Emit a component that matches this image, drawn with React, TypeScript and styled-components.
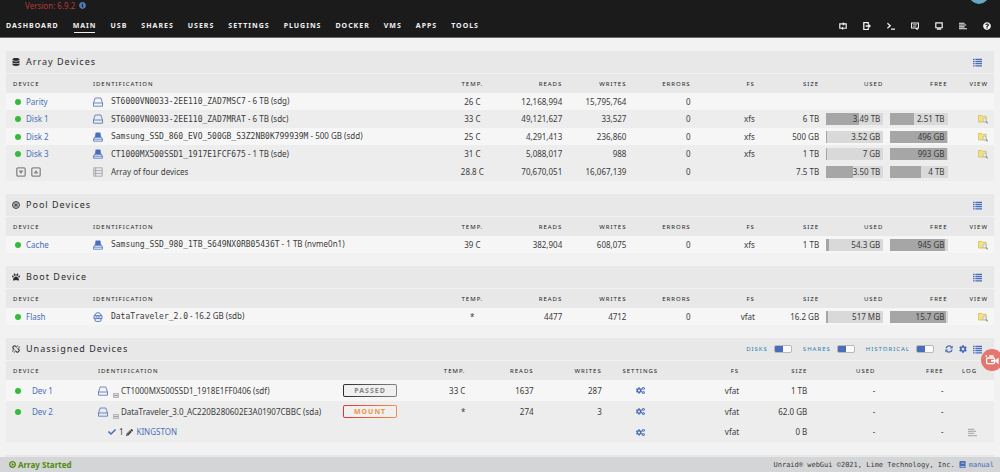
import React from 'react';
import styled, { createGlobalStyle, css } from 'styled-components';
import {
  FaBook,
  FaCheck,
  FaCog,
  FaCogs,
  FaDatabase,
  FaInfoCircle,
  FaPaw,
  FaPencilAlt,
  FaQuestionCircle,
} from 'react-icons/fa';

const ink = '#3a3a3a';
const blue = '#486dba';
const sans = '"Noto Sans", "Open Sans", sans-serif';
const mono = '"DejaVu Sans Mono", "Liberation Mono", monospace';

const GlobalStyle = createGlobalStyle`
  * { box-sizing: border-box; }
  body {
    margin: 0;
    background: #f2f2f2;
    color: ${ink};
    font: 8px/12px ${sans};
  }
  a { color: ${blue}; text-decoration: none; }
  svg { display: block; flex: none; }
`;

const Shell = styled.div`
  display: flex;
  flex-direction: column;
  height: 100vh;
  overflow: hidden;
`;

/* ---------- header ---------- */

const Header = styled.header`
  position: relative;
  flex: none;
  background: #1b1b1b;
  border-bottom: 1px solid #6a6a6a;
  overflow: hidden;
`;

const Version = styled.div`
  display: flex;
  align-items: center;
  gap: 4px;
  height: 15px;
  padding: 0 25px 4px;
  line-height: 11px;
  color: #b23a3a;
  svg { color: #4f78bd; }
`;

const Avatar = styled.span`
  position: absolute;
  top: -16px;
  right: 11px;
  width: 20px;
  height: 20px;
  border-radius: 50%;
  background: #63a9c4;
`;

const NavBar = styled.nav`
  display: flex;
  justify-content: space-between;
  height: 22px;
  padding: 0 9px 0 6px;
`;

const NavGroup = styled.div<{ $gap: number }>`
  display: flex;
  align-items: center;
  gap: ${(p) => p.$gap}px;
`;

const NavLink = styled.a<{ $active?: boolean }>`
  position: relative;
  color: #f2f2f2;
  font-size: 7px;
  font-weight: 700;
  letter-spacing: 1px;
  ${(p) =>
    p.$active &&
    css`
      &::after {
        content: '';
        position: absolute;
        left: 1px;
        right: 2px;
        bottom: -1px;
        height: 1px;
        background: #f2f2f2;
      }
    `}
`;

const ToolButton = styled.button`
  display: flex;
  padding: 0;
  border: 0;
  background: none;
  color: ${(p) => p.color ?? '#f2f2f2'};
`;

/* ---------- panels ---------- */

const Main = styled.main`
  flex: 1;
  min-height: 0;
  overflow: hidden;
  display: flex;
  flex-direction: column;
  gap: 13px;
  padding: 13px 6px 0;
`;

const Panel = styled.section`
  flex: none;
`;

const PanelTitle = styled.div`
  display: flex;
  align-items: center;
  justify-content: space-between;
  height: 22px;
  padding: 0 12px 0 6px;
  background: #e8e8e8;
`;

const Heading = styled.h2`
  display: flex;
  align-items: center;
  gap: 6px;
  margin: 0;
  font-size: 9px;
  font-weight: 400;
  letter-spacing: 1px;
  color: #2c2c2c;
`;

const Tools = styled.div`
  display: flex;
  align-items: center;
  gap: 6px;
`;

const SwitchLabel = styled.label`
  display: flex;
  align-items: center;
  gap: 6px;
  margin-right: 5px;
  color: #1f7fae;
  font-size: 6px;
  letter-spacing: 1px;
`;

const Switch = styled.input`
  appearance: none;
  width: 18px;
  height: 8px;
  margin: 0;
  border: 1px solid #b8b8b8;
  border-radius: 2px;
  background: linear-gradient(90deg, #486dba 50%, #fafafa 50%);
`;

const Table = styled.table<{ $roomy?: boolean }>`
  width: 100%;
  margin-top: 1px;
  table-layout: fixed;
  border-collapse: collapse;

  th, td {
    padding: 0;
    white-space: nowrap;
    text-align: right;
    font-weight: 400;
  }
  th {
    height: 19px;
    background: #e8e8e8;
    color: #222;
    font-size: 6px;
    line-height: 10px;
    letter-spacing: 1px;
  }
  td { height: ${(p) => (p.$roomy ? 21 : 17)}px; }
  tbody tr { background: #f6f6f6; }
  tbody tr:nth-child(even), tfoot tr { background: #ededed; }
  tbody tr:nth-child(even) td, tfoot td { height: ${(p) => (p.$roomy ? 21 : 18)}px; }
  th:first-child, td:first-child { padding-left: 7px; text-align: left; }
  th:last-child, td:last-child { padding-right: ${(p) => (p.$roomy ? 17 : 6)}px; }
  th.left, td.left { text-align: left; }
  th.center, td.center { text-align: center; }
`;

const PartitionRow = styled.tr`
  && { background: #ededed; }
  && td { height: 20px; }
`;

const Line = styled.div<{ $gap?: number; $indent?: number }>`
  display: flex;
  align-items: center;
  gap: ${(p) => p.$gap ?? 5}px;
  padding-left: ${(p) => p.$indent ?? 0}px;
`;

const Orb = styled.span`
  width: 6px;
  height: 6px;
  margin: 0 0 0 2px;
  border-radius: 50%;
  background: #33bb3a;
`;

const Serial = styled.span`
  font-family: ${mono};
`;

const Meter = styled.div`
  position: relative;
  height: 12px;
  margin-left: 7px;
  background: #d9d9d9;
`;

const Fill = styled.div`
  height: 100%;
  background: #a6a6a6;
`;

const MeterText = styled.span`
  position: absolute;
  inset: 0 3px 0 0;
`;

const EndIcon = styled.a`
  display: flex;
  justify-content: flex-end;
`;

const MutedIcon = styled.span`
  display: flex;
  justify-content: flex-end;
  color: #b0b0b0;
`;

const CenterIcon = styled.a`
  display: flex;
  justify-content: center;
`;

const Expand = styled.button`
  align-self: flex-end;
  width: 6px;
  height: 5px;
  padding: 0;
  border: 1px solid #b8b8b8;
  background: linear-gradient(#dcdcdc 33%, #a0a0a0 33% 67%, #dcdcdc 67%);
`;

const Identity = styled.div`
  display: flex;
  gap: 5px;
  height: 15px;
  align-items: center;
`;

const Action = styled.button<{ $from: string; $to: string }>`
  display: block;
  width: 100%;
  height: 13px;
  padding: 0;
  border: 1px solid transparent;
  border-radius: 2px;
  background:
    linear-gradient(#f0f0f0, #f0f0f0) padding-box,
    linear-gradient(90deg, ${(p) => p.$from}, ${(p) => p.$to}) border-box;
  color: ${(p) => p.$to};
  font: 700 7px/10px ${sans};
  letter-spacing: 1px;
`;

/* ---------- footer and overlay ---------- */

const Footer = styled.footer`
  flex: none;
  display: flex;
  align-items: center;
  justify-content: space-between;
  height: 15px;
  padding: 0 6px 0 9px;
  background: #d4d5d6;
`;

const Status = styled.strong`
  display: flex;
  align-items: center;
  gap: 2px;
  color: #4f8a10;
`;

const Credits = styled.div`
  display: flex;
  align-items: center;
  gap: 4px;
  font: 7px/12px ${mono};
  a { display: flex; align-items: center; gap: 3px; }
`;

const Recorder = styled.button`
  position: fixed;
  top: 349px;
  right: -3px;
  display: flex;
  align-items: center;
  justify-content: center;
  width: 22px;
  height: 22px;
  padding: 0;
  border: 0;
  border-radius: 50%;
  background: #e4766d;
`;

/* ---------- drawings ---------- */

const Glyph = ({ size = 10, children }: { size?: number; children: React.ReactNode }) => (
  <svg width={size} height={size} viewBox="0 0 10 10" fill="none" stroke="currentColor" strokeWidth="1">
    {children}
  </svg>
);

const HddIcon = () => (
  <Glyph>
    <path d="M2.200 1h5.600l1.700 5v3.200h-9V6z" strokeWidth=".8" />
    <path d="M.5 6h9" strokeWidth=".8" />
  </Glyph>
);

const SsdIcon = () => (
  <Glyph>
    <path d="M2.800.8h4.400l.8 4.600H2z" fill="currentColor" strokeWidth=".4" />
    <path d="M1.800 5 .6 7v2.200h8.800V7L8.200 5M.6 7.200h8.800" strokeWidth=".8" />
  </Glyph>
);

const FlashIcon = () => (
  <Glyph>
    <path d="M2 3.400C2.200 1.200 3.400.8 5 .8s2.800.4 3 2.600" strokeWidth=".9" />
    <path d="M1 3.600h8v3H1zM2 6.600v1.600c0 .8.5 1.200 1.200 1.200h3.600c.7 0 1.200-.4 1.200-1.200V6.600M2.500 5h5" strokeWidth=".9" />
  </Glyph>
);

const StackIcon = () => (
  <Glyph>
    <path d="M.8.8h8.400v8.400H.8zM.8 3.600h8.400M.8 6.400h8.400M2.700.8v8.400" stroke="#9a9a9a" strokeWidth=".8" />
  </Glyph>
);

const BrowseIcon = () => (
  <Glyph>
    <path d="M.6 1.500h3l.8.800h3.800v5.700H.6z" fill="#f3e184" stroke="#d8bd4c" strokeWidth=".8" />
    <circle cx="6.600" cy="6" r="1.900" fill="#e6e9ee" stroke="#b4b8bf" strokeWidth=".8" />
    <path d="m8 7.500 1.700 1.800" stroke="#8f8f8f" strokeWidth="1.200" />
  </Glyph>
);

const CaretBox = ({ up }: { up?: boolean }) => (
  <Glyph>
    <rect x=".8" y=".8" width="8.400" height="8.400" rx="1.200" strokeWidth="1.300" />
    <path d={up ? 'M2.600 6.500 5 3l2.400 3.500z' : 'M2.600 3.500 5 7l2.400-3.500z'} fill="currentColor" stroke="none" />
  </Glyph>
);

const PoolIcon = () => (
  <Glyph size={8}>
    <circle cx="5" cy="5" r="4.300" strokeWidth="1.200" />
    <circle cx="5" cy="5" r="2.500" strokeWidth=".8" />
    <circle cx="5" cy="5" r="1.300" fill="currentColor" stroke="none" />
  </Glyph>
);

const BrokenChainIcon = () => (
  <Glyph size={8}>
    <path d="M5.800 2.900 4.300 1.400a1.500 1.500 0 0 0-2.100 0l-.7.7a1.500 1.500 0 0 0 0 2.100L3 5.700M7 4.300l1.500 1.500a1.500 1.500 0 0 1 0 2.100l-.7.7a1.500 1.500 0 0 1-2.100 0L4.200 7.100" strokeWidth="1.300" />
    <path d="M.4 8.700 2.100 7M3 9.800V7.900M.1 6.500h1.700M9.600 1.300 7.900 3M7 .2V2M9.900 3.500H8.200" strokeWidth=".8" />
  </Glyph>
);

const RefreshIcon = () => (
  <Glyph size={8}>
    <path d="M1.200 4.300A3.900 3.900 0 0 1 8 2.500M8.800 5.700A3.900 3.900 0 0 1 2 7.500" strokeWidth="1.600" />
    <path d="M9.600.7v3.600H6zM.4 9.300V5.700H4z" fill="currentColor" stroke="none" />
  </Glyph>
);

const PlayIcon = () => (
  <Glyph size={7}>
    <circle cx="5" cy="5" r="4" strokeWidth="1.900" />
    <path d="M3.800 2.700 7.500 5 3.800 7.300z" fill="currentColor" stroke="none" />
  </Glyph>
);

const ListIcon = () => (
  <Glyph size={9}>
    <path d="M0 1.500h1.700M0 3.900h1.700M0 6.300h1.700M0 8.700h1.700M2.600 1.500H10M2.600 3.900H10M2.600 6.300H10M2.600 8.700H10" strokeWidth="1.500" />
  </Glyph>
);

const LogIcon = ({ size = 8 }: { size?: number }) => (
  <Glyph size={size}>
    <path d="M0 1.500h7M0 3.800h9M0 6.100h7M0 8.400h10" strokeWidth="1.400" />
  </Glyph>
);

const navTools: { name: string; icon: React.ReactNode }[] = [
  {
    name: 'Switch language',
    icon: (
      <Glyph size={8}>
        <path d="M3.200 7.800H1V2.400h4.500M6.500 2.400H9v5.400H4.800" strokeWidth="1.500" />
        <path d="M4.800.1 7.700 2.400 4.800 4.700zM5.200 5.500 2.300 7.800l2.900 2.300z" fill="currentColor" stroke="none" />
      </Glyph>
    ),
  },
  {
    name: 'Logout',
    icon: (
      <Glyph size={8}>
        <path d="M6.500 2.800V.8H1v8.600h5.500v-2M3.300 5H8" strokeWidth="1.600" />
        <path d="M6.600 2 10 5 6.600 8z" fill="currentColor" stroke="none" />
      </Glyph>
    ),
  },
  {
    name: 'Terminal',
    icon: (
      <Glyph size={8}>
        <path d="m.5 1.500 3.600 3.200L.5 7.900M5 9h5" strokeWidth="1.600" />
      </Glyph>
    ),
  },
  {
    name: 'Feedback',
    icon: (
      <Glyph size={8}>
        <path d="M.7 1.200h8.600v6.300H7.800v1.800L5.800 7.500H.7z" strokeWidth="1.300" />
        <path d="M2.500 3.500h5M2.500 5.300h4" strokeWidth=".9" />
      </Glyph>
    ),
  },
  {
    name: 'Info',
    icon: (
      <Glyph size={8}>
        <path d="M1 1h8v6.200H1z" strokeWidth="1.500" />
        <path d="M2.300 9h5.400M3.500 7.500V9M6.500 7.500V9" strokeWidth="1.500" />
      </Glyph>
    ),
  },
  { name: 'Log', icon: <LogIcon /> },
  { name: 'Help', icon: <FaQuestionCircle size={8} /> },
];

const CameraIcon = () => (
  <svg width="14" height="12" viewBox="0 0 14 12" fill="none" stroke="#fff" strokeWidth="1.300">
    <rect x="1.600" y="4" width="8" height="5.600" rx="1" />
    <path d="M10.600 6.800 13 5v3.800z" fill="#fff" />
    <path d="M6 6.800h3" strokeWidth="2" />
    <path d="M5 3V2h3v1" />
    <path d="M.5 2h1.500" />
  </svg>
);

/* ---------- data ---------- */

const navItems = ['DASHBOARD', 'MAIN', 'USB', 'SHARES', 'USERS', 'SETTINGS', 'PLUGINS', 'DOCKER', 'VMS', 'APPS', 'TOOLS'];

type Space = { label: string; percent: number };

type Disk = {
  name: string;
  icon: React.ReactNode;
  serial: string;
  detail: string;
  temp: string;
  reads: string;
  writes: string;
  fs?: string;
  size?: string;
  used?: Space;
  free?: Space;
};

const arrayDisks: Disk[] = [
  { name: 'Parity', icon: <HddIcon />, serial: 'ST6000VN0033-2EE110_ZAD7MSC7', detail: '6 TB (sdg)', temp: '26 C', reads: '12,168,994', writes: '15,795,764' },
  { name: 'Disk 1', icon: <HddIcon />, serial: 'ST6000VN0033-2EE110_ZAD7MRAT', detail: '6 TB (sdc)', temp: '33 C', reads: '49,121,627', writes: '33,527', fs: 'xfs', size: '6 TB', used: { label: '3.49 TB', percent: 58 }, free: { label: '2.51 TB', percent: 42 } },
  { name: 'Disk 2', icon: <SsdIcon />, serial: 'Samsung_SSD_860_EVO_500GB_S3Z2NB0K799939M', detail: '500 GB (sdd)', temp: '25 C', reads: '4,291,413', writes: '236,860', fs: 'xfs', size: '500 GB', used: { label: '3.52 GB', percent: 1 }, free: { label: '496 GB', percent: 99 } },
  { name: 'Disk 3', icon: <SsdIcon />, serial: 'CT1000MX500SSD1_1917E1FCF675', detail: '1 TB (sde)', temp: '31 C', reads: '5,088,017', writes: '988', fs: 'xfs', size: '1 TB', used: { label: '7 GB', percent: 1 }, free: { label: '993 GB', percent: 99 } },
];

const poolDisks: Disk[] = [
  { name: 'Cache', icon: <SsdIcon />, serial: 'Samsung_SSD_980_1TB_S649NX0RB05436T', detail: '1 TB (nvme0n1)', temp: '39 C', reads: '382,904', writes: '608,075', fs: 'xfs', size: '1 TB', used: { label: '54.3 GB', percent: 5 }, free: { label: '945 GB', percent: 95 } },
];

const bootDisks: Disk[] = [
  { name: 'Flash', icon: <FlashIcon />, serial: 'DataTraveler_2.0', detail: '16.2 GB (sdb)', temp: '*', reads: '4477', writes: '4712', fs: 'vfat', size: '16.2 GB', used: { label: '517 MB', percent: 3 }, free: { label: '15.7 GB', percent: 97 } },
];

const unassigned = [
  { name: 'Dev 1', id: 'CT1000MX500SSD1_1918E1FF0406 (sdf)', action: 'PASSED', from: '#2c2c2c', to: '#858585', temp: '33 C', reads: '1637', writes: '287', size: '1 TB' },
  { name: 'Dev 2', id: 'DataTraveler_3.0_AC220B280602E3A01907CBBC (sda)', action: 'MOUNT', from: '#d93636', to: '#f0914a', temp: '*', reads: '274', writes: '3', size: '62.0 GB' },
];

const deviceColumns = ['8.8%', '35.8%', '5.2%', '6.5%', '6.5%', '6.5%', '6.5%', '6.5%', '6.5%', '6.5%', '4.7%'];
const unassignedColumns = ['9.3%', '24.8%', '5.5%', '6.9%', '6.9%', '6.9%', '7.8%', '6.1%', '6.9%', '6.9%', '6.9%', '5.1%'];

/* ---------- components ---------- */

const Columns = ({ widths }: { widths: string[] }) => (
  <colgroup>
    {widths.map((width, i) => (
      <col key={i} style={{ width }} />
    ))}
  </colgroup>
);

const SpaceMeter = ({ space }: { space: Space }) => (
  <Meter>
    <Fill style={{ width: `${space.percent}%` }} />
    <MeterText>{space.label}</MeterText>
  </Meter>
);

const ListToggle = () => (
  <ToolButton color={blue} aria-label="Toggle list view">
    <ListIcon />
  </ToolButton>
);

type DevicePanelProps = { title: string; icon: React.ReactNode; disks: Disk[]; children?: React.ReactNode };

const DevicePanel = ({ title, icon, disks, children }: DevicePanelProps) => (
  <Panel>
    <PanelTitle>
      <Heading>{icon}{title}</Heading>
      <ListToggle />
    </PanelTitle>
    <Table>
      <Columns widths={deviceColumns} />
      <thead>
        <tr>
          <th>DEVICE</th>
          <th className="left">IDENTIFICATION</th>
          <th className="center">TEMP.</th>
          <th>READS</th>
          <th>WRITES</th>
          <th>ERRORS</th>
          <th>FS</th>
          <th>SIZE</th>
          <th>USED</th>
          <th>FREE</th>
          <th>VIEW</th>
        </tr>
      </thead>
      <tbody>
        {disks.map((d) => (
          <tr key={d.name}>
            <td><Line><Orb /><a href="#device">{d.name}</a></Line></td>
            <td className="left">
              <Line $gap={8}>
                <a href="#identity" aria-label={`${d.name} details`}>{d.icon}</a>
                <span><Serial>{d.serial}</Serial> - {d.detail}</span>
              </Line>
            </td>
            <td className="center">{d.temp}</td>
            <td>{d.reads}</td>
            <td>{d.writes}</td>
            <td>0</td>
            <td>{d.fs}</td>
            <td>{d.size}</td>
            <td>{d.used && <SpaceMeter space={d.used} />}</td>
            <td>{d.free && <SpaceMeter space={d.free} />}</td>
            <td>{d.fs && <EndIcon href="#browse" aria-label={`Browse ${d.name}`}><BrowseIcon /></EndIcon>}</td>
          </tr>
        ))}
      </tbody>
      {children}
    </Table>
  </Panel>
);

const SettingsLink = () => (
  <CenterIcon href="#settings" aria-label="Device settings"><FaCogs size={9} /></CenterIcon>
);

export default function App() {
  return (
    <Shell>
      <GlobalStyle />
      <Header>
        <Version>Version: 6.9.2 <FaInfoCircle size={7} /></Version>
        <Avatar />
        <NavBar>
          <NavGroup $gap={14}>
            {navItems.map((item) => (
              <NavLink key={item} href="#nav" $active={item === 'MAIN'}>{item}</NavLink>
            ))}
          </NavGroup>
          <NavGroup $gap={16}>
            {navTools.map((tool) => (
              <ToolButton key={tool.name} aria-label={tool.name}>{tool.icon}</ToolButton>
            ))}
          </NavGroup>
        </NavBar>
      </Header>

      <Main>
        <DevicePanel title="Array Devices" icon={<FaDatabase size={8} />} disks={arrayDisks}>
          <tfoot>
            <tr>
              <td>
                <Line $indent={3}>
                  <ToolButton color="#858585" aria-label="Spin down"><CaretBox /></ToolButton>
                  <ToolButton color="#858585" aria-label="Spin up"><CaretBox up /></ToolButton>
                </Line>
              </td>
              <td className="left"><Line $gap={8}><StackIcon />Array of four devices</Line></td>
              <td className="center">28.8 C</td>
              <td>70,670,051</td>
              <td>16,067,139</td>
              <td>0</td>
              <td />
              <td>7.5 TB</td>
              <td><SpaceMeter space={{ label: '3.50 TB', percent: 47 }} /></td>
              <td><SpaceMeter space={{ label: '4 TB', percent: 53 }} /></td>
              <td />
            </tr>
          </tfoot>
        </DevicePanel>

        <DevicePanel title="Pool Devices" icon={<PoolIcon />} disks={poolDisks} />
        <DevicePanel title="Boot Device" icon={<FaPaw size={8} />} disks={bootDisks} />

        <Panel>
          <PanelTitle>
            <Heading><BrokenChainIcon />Unassigned Devices</Heading>
            <Tools>
              {['DISKS', 'SHARES', 'HISTORICAL'].map((name) => (
                <SwitchLabel key={name}>{name}<Switch type="checkbox" /></SwitchLabel>
              ))}
              <ToolButton color={blue} aria-label="Refresh"><RefreshIcon /></ToolButton>
              <ToolButton color={blue} aria-label="Settings"><FaCog size={8} /></ToolButton>
              <ListToggle />
            </Tools>
          </PanelTitle>
          <Table $roomy>
            <Columns widths={unassignedColumns} />
            <thead>
              <tr>
                <th>DEVICE</th>
                <th className="left" colSpan={2}>IDENTIFICATION</th>
                <th>TEMP.</th>
                <th>READS</th>
                <th>WRITES</th>
                <th className="center">SETTINGS</th>
                <th>FS</th>
                <th>SIZE</th>
                <th>USED</th>
                <th>FREE</th>
                <th>LOG</th>
              </tr>
            </thead>
            <tbody>
              {unassigned.map((d) => (
                <tr key={d.name}>
                  <td><Line $gap={11}><Orb /><a href="#device">{d.name}</a></Line></td>
                  <td className="left">
                    <Line $gap={2}>
                      <Identity>
                        <a href="#identity" aria-label={`${d.name} details`}><HddIcon /></a>
                        <Expand aria-label="Show partitions" />
                      </Identity>
                      {d.id}
                    </Line>
                  </td>
                  <td><Action $from={d.from} $to={d.to}>{d.action}</Action></td>
                  <td>{d.temp}</td>
                  <td>{d.reads}</td>
                  <td>{d.writes}</td>
                  <td><SettingsLink /></td>
                  <td>vfat</td>
                  <td>{d.size}</td>
                  <td>-</td>
                  <td>-</td>
                  <td />
                </tr>
              ))}
              <PartitionRow>
                <td />
                <td className="left">
                  <Line $gap={3} $indent={10}>
                    <FaCheck size={8} color={blue} />1<FaPencilAlt size={7} />
                    <a href="#partition">KINGSTON</a>
                  </Line>
                </td>
                <td />
                <td />
                <td />
                <td />
                <td><SettingsLink /></td>
                <td>vfat</td>
                <td>0 B</td>
                <td>-</td>
                <td>-</td>
                <td><MutedIcon><LogIcon size={9} /></MutedIcon></td>
              </PartitionRow>
            </tbody>
          </Table>
        </Panel>

        <Panel><PanelTitle /></Panel>
      </Main>

      <Footer>
        <Status><PlayIcon />Array Started</Status>
        <Credits>
          Unraid® webGui ©2021, Lime Technology, Inc.
          <a href="#manual"><FaBook size={7} />manual</a>
        </Credits>
      </Footer>

      <Recorder aria-label="Record screen"><CameraIcon /></Recorder>
    </Shell>
  );
}
